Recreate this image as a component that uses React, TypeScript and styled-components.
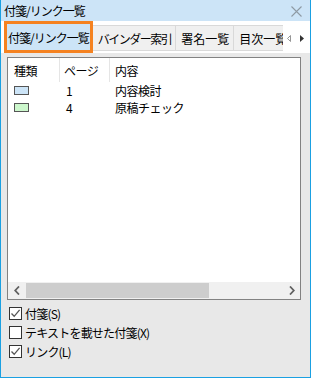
import styled, { createGlobalStyle } from "styled-components";

const GlobalStyle = createGlobalStyle`
	body {
		margin: 0;
		font-family: "Noto Sans CJK JP", "Noto Sans", sans-serif;
		font-size: 12px;
		color: #000;
	}
`;

const Window = styled.div`
	box-sizing: border-box;
	width: 311px;
	height: 378px;
	border: 1px solid #1aa0e2;
	border-top: none;
	background-color: #e8e8e8;
	display: flex;
	flex-direction: column;
`;

const TitleBar = styled.div`
	height: 21px;
	display: flex;
	align-items: center;
	justify-content: space-between;
	padding: 0 8px 0 3px;
	background-color: #cce4f7;
	letter-spacing: -1px;
	.close {
		display: flex;
		margin-top: 2px;
	}
`;

const TabStrip = styled.div`
	height: 32px;
	display: flex;
	align-items: flex-end;
	background-color: #ffffff;
	padding-left: 3px;
	.tabs {
		display: flex;
		align-items: flex-end;
		width: 279px;
		overflow: hidden;
		flex-shrink: 0;
	}
	.arrows {
		display: flex;
		gap: 9px;
		align-items: center;
		height: 26px;
		margin-left: 4px;
		margin-bottom: 2px;
	}
`;

const Tab = styled.div<{ $active?: boolean; $spacing?: number }>`
	box-sizing: border-box;
	flex-shrink: 0;
	display: flex;
	align-items: center;
	white-space: nowrap;
	letter-spacing: ${({ $spacing = 0 }) => $spacing}px;
	${({ $active }) =>
		$active
			? `
		height: 32px;
		padding: 0 1px 0 1px;
		border: 3px solid #f58220;
		background-color: #cce4f7;
	`
			: `
		height: 26px;
		margin-bottom: 2px;
		padding: 0 4px 0 5px;
		background-color: #f0f0f0;
		border: 1px solid #d9d9d9;
		border-left: none;
	`}
`;

const Body = styled.div`
	flex: 1;
	display: flex;
	flex-direction: column;
	padding: 4px 9px 0 6px;
`;

const ListBox = styled.div`
	height: 243px;
	box-sizing: border-box;
	border: 1px solid #828282;
	background-color: #ffffff;
	display: flex;
	flex-direction: column;
	.rows {
		flex: 1;
	}
`;

const Row = styled.div<{ $header?: boolean }>`
	display: grid;
	grid-template-columns: 51px 50px 1fr;
	height: ${({ $header }) => ($header ? "24px" : "17px")};
	align-items: stretch;
	.cell {
		display: flex;
		align-items: center;
		white-space: nowrap;
		letter-spacing: -0.5px;
	}
	.c1 {
		padding-left: 6px;
	}
	.c2 {
		padding-left: ${({ $header }) => ($header ? "4px" : "6px")};
		border-left: 1px solid ${({ $header }) => ($header ? "#e5e5e5" : "transparent")};
	}
	.c3 {
		padding-left: 5px;
		border-left: 1px solid ${({ $header }) => ($header ? "#e5e5e5" : "transparent")};
	}
`;

const Swatch = styled.span<{ $color: string }>`
	display: inline-block;
	box-sizing: border-box;
	width: 15px;
	height: 9px;
	border: 1px solid #555555;
	background-color: ${({ $color }) => $color};
`;

const HScroll = styled.div`
	height: 17px;
	display: flex;
	align-items: center;
	background-color: #f0f0f0;
	.btn {
		width: 17px;
		height: 17px;
		display: flex;
		align-items: center;
		justify-content: center;
		flex-shrink: 0;
	}
	.track {
		flex: 1;
		height: 17px;
		display: flex;
		align-items: center;
	}
	.thumb {
		width: 183px;
		height: 15px;
		margin-left: 1px;
		background-color: #cdcdcd;
	}
`;

const Options = styled.div`
	display: flex;
	flex-direction: column;
	gap: 6px;
	padding: 7px 0 0 2px;
`;

const CheckRow = styled.label`
	display: flex;
	align-items: center;
	gap: 3px;
	height: 13px;
	letter-spacing: -0.8px;
	.box {
		box-sizing: border-box;
		width: 13px;
		height: 13px;
		border: 1px solid #333333;
		background-color: #ffffff;
		display: flex;
		align-items: center;
		justify-content: center;
	}
`;

const tabs = [
	{ label: "付箋/リンク一覧", spacing: -1, active: true },
	{ label: "バインダー索引", spacing: -1.5 },
	{ label: "署名一覧", spacing: 0 },
	{ label: "目次一覧", spacing: 0 },
];

const notes = [
	{ color: "#cce4f7", page: "1", text: "内容検討" },
	{ color: "#ccf7cc", page: "4", text: "原稿チェック" },
];

const options = [
	{ label: "付箋(S)", checked: true },
	{ label: "テキストを載せた付箋(X)", checked: false },
	{ label: "リンク(L)", checked: true },
];

const Check = () => (
	<svg width="11" height="11" viewBox="0 0 11 11">
		<path d="M1.5 5.5 L4.2 8.3 L9.6 1.8" fill="none" stroke="#555" strokeWidth="1.3" />
	</svg>
);

const App = () => {
	return (
		<>
			<GlobalStyle />
			<Window>
				<TitleBar>
					<span>付箋/リンク一覧</span>
					<span className="close">
						<svg width="11" height="11" viewBox="0 0 11 11">
							<path d="M0.5 0.5 L10.5 10.5 M10.5 0.5 L0.5 10.5" stroke="#8e9aa4" strokeWidth="1.1" />
						</svg>
					</span>
				</TitleBar>
				<TabStrip>
					<div className="tabs">
						{tabs.map((t) => (
							<Tab key={t.label} $active={t.active} $spacing={t.spacing}>
								{t.label}
							</Tab>
						))}
					</div>
					<div className="arrows">
						<svg width="4" height="7" viewBox="0 0 4 7">
							<path d="M3.5 0.5 L0.5 3.5 L3.5 6.5 Z" fill="none" stroke="#8a8a8a" strokeWidth="0.9" />
						</svg>
						<svg width="4" height="7" viewBox="0 0 4 7">
							<path d="M0 0 L4 3.5 L0 7 Z" fill="#333" />
						</svg>
					</div>
				</TabStrip>
				<Body>
					<ListBox>
						<div className="rows">
							<Row $header>
								<div className="cell c1">種類</div>
								<div className="cell c2">ページ</div>
								<div className="cell c3">内容</div>
							</Row>
							{notes.map((n) => (
								<Row key={n.text}>
									<div className="cell c1">
										<Swatch $color={n.color} />
									</div>
									<div className="cell c2">{n.page}</div>
									<div className="cell c3">{n.text}</div>
								</Row>
							))}
						</div>
						<HScroll>
							<div className="btn">
								<svg width="6" height="9" viewBox="0 0 6 9">
									<path d="M5 0.5 L1.2 4.5 L5 8.5" fill="none" stroke="#606060" strokeWidth="1.8" />
								</svg>
							</div>
							<div className="track">
								<div className="thumb" />
							</div>
							<div className="btn">
								<svg width="6" height="9" viewBox="0 0 6 9">
									<path d="M1 0.5 L4.8 4.5 L1 8.5" fill="none" stroke="#606060" strokeWidth="1.8" />
								</svg>
							</div>
						</HScroll>
					</ListBox>
					<Options>
						{options.map((o) => (
							<CheckRow key={o.label}>
								<span className="box">{o.checked && <Check />}</span>
								<span>{o.label}</span>
							</CheckRow>
						))}
					</Options>
				</Body>
			</Window>
		</>
	);
};

export default App;
